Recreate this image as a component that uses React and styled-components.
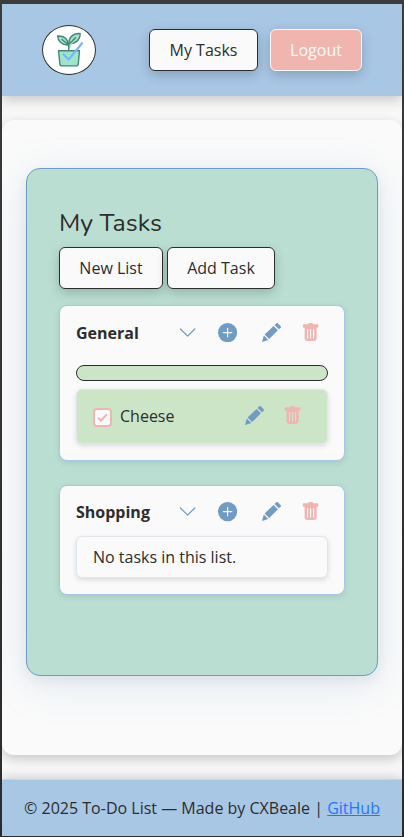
import React from "react";
import styled, { createGlobalStyle } from "styled-components";
import {
  BsChevronDown,
  BsPlusCircleFill,
  BsTrashFill,
} from "react-icons/bs";

const GlobalStyle = createGlobalStyle`
  *, *::before, *::after { box-sizing: border-box; }
  body {
    margin: 0;
    background: #343435;
    color: #2d2d2d;
    font: 16px/24px "Open Sans", sans-serif;
  }
`;

const Frame = styled.div`
  height: 837px;
  padding: 4px 2px 1px;
  background: linear-gradient(#3b3b3c, #2b2b2c);
`;

const Page = styled.div`
  display: flex;
  flex-direction: column;
  height: 832px;
  overflow: hidden;
  background: #f8f8f8;
`;

const Header = styled.header`
  display: flex;
  align-items: center;
  flex: 0 0 92px;
  padding: 0 40px;
  background: #a8c7e5;
  box-shadow: 0 4px 12px rgba(0, 0, 0, 0.2);
`;

const Logo = styled.div`
  display: flex;
  align-items: center;
  justify-content: center;
  width: 54px;
  height: 50px;
  border: 1px solid #2d2d2d;
  border-radius: 50%;
  background: #fff;
`;

const Nav = styled.nav`
  display: flex;
  gap: 12px;
  margin-left: auto;
`;

const Button = styled.button`
  width: ${(p) => p.$width}px;
  height: 42px;
  padding: 0;
  border: 1px solid ${(p) => (p.$danger ? "#fafafa" : "#2d2d2d")};
  border-radius: 6px;
  background: ${(p) => (p.$danger ? "#f1b5b0" : "#fafafa")};
  color: ${(p) => (p.$danger ? "#fafafa" : "#2d2d2d")};
  font: inherit;
  white-space: nowrap;
  box-shadow: 0 4px 12px rgba(0, 0, 0, 0.2);
`;

const Main = styled.main`
  flex: 0 0 635px;
  margin: 24px 0;
  padding: 48px 24px 0;
  border-radius: 12px;
  background: #fafafa;
  box-shadow: 0 4px 12px rgba(0, 0, 0, 0.2);
`;

const Board = styled.section`
  height: 508px;
  padding: 38px 32px 0;
  border: 1px solid #6f9bc8;
  border-radius: 14px;
  background: #badfd2;
  box-shadow: 0 8px 40px rgba(111, 155, 200, 0.2), 0 4px 12px rgba(0, 0, 0, 0.06);
`;

const Title = styled.h1`
  margin: 0 0 8px;
  font: 400 24.9px/32px Nunito, "Open Sans", sans-serif;
`;

const Actions = styled.div`
  display: flex;
  gap: 4px;
  margin-bottom: 16px;
`;

const ListCard = styled.article`
  width: 286px;
  height: ${(p) => p.$height}px;
  margin-bottom: 24px;
  padding: 0 16px;
  border: 1px solid #a8c7e5;
  border-radius: 8px;
  background: #fafafa;
  box-shadow: 0 2px 6px rgba(0, 0, 0, 0.1);
`;

const ListHeader = styled.div`
  display: flex;
  align-items: center;
  height: ${(p) => p.$height}px;
  padding: ${(p) => p.$offset || 0}px 8px 0 0;
`;

const ListName = styled.h2`
  margin: 0 auto 0 0;
  font: 700 16px/24px "Open Sans", sans-serif;
`;

const IconButton = styled.button`
  display: flex;
  margin: 0 0 0 ${(p) => p.$gap || 0}px;
  padding: 0;
  border: 0;
  background: none;
  color: ${(p) => (p.$danger ? "#f1b5b0" : "#6f9bc4")};
  font-size: 19.2px;
`;

const Progress = styled.div`
  height: 16px;
  margin: 6px 0 8px;
  border: 1px solid #2d2d2d;
  border-radius: 8px;
  background: #cce5c7;
`;

const Task = styled.div`
  display: flex;
  align-items: center;
  height: ${(p) => (p.$empty ? 42 : 55)}px;
  padding: 0 ${(p) => (p.$empty ? 16 : 25)}px ${(p) => (p.$empty ? 0 : 2)}px 16px;
  border: 1px solid #e1e6ed;
  border-radius: 6px;
  background: ${(p) => (p.$empty ? "#fafafa" : "#cce5c7")};
  box-shadow: 0 2px 5px rgba(45, 55, 90, 0.16);
`;

const Checkbox = styled.span`
  display: flex;
  align-items: center;
  justify-content: center;
  width: 19px;
  height: 19px;
  margin: 4px 8px 0 0;
  border: 2px solid #f1b5b0;
  border-radius: 4px;
  background: #fafafa;
`;

const TaskName = styled.span`
  margin-right: auto;
`;

const Footer = styled.footer`
  flex: 1;
  padding-top: 16px;
  border-top: 1px solid #badfd2;
  background: #a8c7e5;
  text-align: center;
  white-space: nowrap;
  box-shadow: 0 -2px 10px rgba(0, 0, 0, 0.16);
`;

const FooterLink = styled.a`
  color: #2277ff;
  text-decoration: underline;
`;

function PlantLogo() {
  return (
    <svg width="28" height="36" viewBox="0 0 28 36" fill="none" strokeLinecap="round" strokeLinejoin="round">
      <g fill="#a0e5c8" stroke="#438678" strokeWidth="1.4">
        <path d="M3.5 18.8H24.5L23.3 31.8Q23 33.9 20.8 33.9H7.3Q5.2 33.9 4.9 31.8Z" />
        <path d="M13.3 13C6.8 13.3 2.9 9 2.5 4C8.5 3.8 13 6.5 13.3 13Z" />
        <path d="M14 11.5C13.8 4.8 18.5 1.2 25.2 1.6C25.2 7.9 20.5 12.1 14 11.5Z" />
        <path d="M13.7 18.5V12.5L20.5 5.7M13.2 12.7L7 7.5" />
      </g>
      <path d="M8.7 22.5L13.6 27.6L27 11.2" stroke="#78b5fa" strokeWidth="2.2" />
    </svg>
  );
}

function PencilIcon() {
  return (
    <svg width="19.2" height="19.2" viewBox="0 0 19.2 19.2" fill="currentColor">
      <path d="M0 18.9L1.8 12.5L6.3 17Z" />
      <path d="M2.6 11.5L11.6 2.9L15.9 7.2L7.2 16.1Z" />
      <path d="M12.6 2L14.7 0Q15.1-.3 15.5 0L19 3.6Q19.3 4 19 4.4L16.9 6.3Z" />
    </svg>
  );
}

function ListIcons() {
  return (
    <>
      <IconButton aria-label="Collapse"><BsChevronDown /></IconButton>
      <IconButton aria-label="Add" $gap={21}><BsPlusCircleFill /></IconButton>
      <IconButton aria-label="Edit" $gap={24}><PencilIcon /></IconButton>
      <IconButton aria-label="Delete" $danger $gap={20}><BsTrashFill /></IconButton>
    </>
  );
}

export default function App() {
  return (
    <Frame>
      <GlobalStyle />
      <Page>
        <Header>
          <Logo><PlantLogo /></Logo>
          <Nav>
            <Button $width={109}>My Tasks</Button>
            <Button $width={92} $danger>Logout</Button>
          </Nav>
        </Header>
        <Main>
          <Board>
            <Title>My Tasks</Title>
            <Actions>
              <Button $width={104}>New List</Button>
              <Button $width={108}>Add Task</Button>
            </Actions>
            <ListCard $height={156}>
              <ListHeader $height={53}>
                <ListName>General</ListName>
                <ListIcons />
              </ListHeader>
              <Progress />
              <Task>
                <Checkbox>
                  <svg width="13" height="13" viewBox="0 0 13 13" fill="none" stroke="#f1b5b0" strokeWidth="2">
                    <path d="M2 6.7L5 9.5L11 3.2" />
                  </svg>
                </Checkbox>
                <TaskName>Cheese</TaskName>
                <IconButton aria-label="Edit"><PencilIcon /></IconButton>
                <IconButton aria-label="Delete" $danger $gap={19}><BsTrashFill /></IconButton>
              </Task>
            </ListCard>
            <ListCard $height={110}>
              <ListHeader $height={50} $offset={2}>
                <ListName>Shopping</ListName>
                <ListIcons />
              </ListHeader>
              <Task $empty>No tasks in this list.</Task>
            </ListCard>
          </Board>
        </Main>
        <Footer>
          © 2025 To-Do List — Made by CXBeale | <FooterLink>GitHub</FooterLink>
        </Footer>
      </Page>
    </Frame>
  );
}
